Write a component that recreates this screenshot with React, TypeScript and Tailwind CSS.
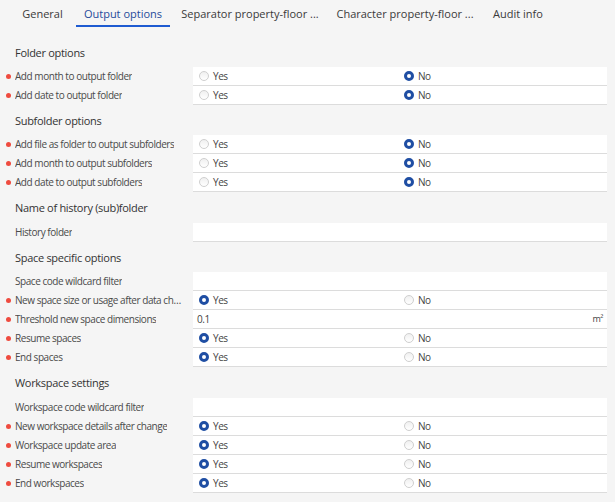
import React from "react";

type Row =
  | { kind: "radio"; label: string; req: boolean; yes: boolean }
  | { kind: "text"; label: string; req: boolean; value?: string; unit?: string };

type Section = { title: string; h: string; rows: Row[] };

const sections: Section[] = [
  {
    title: "Folder options",
    h: "h-[30px]",
    rows: [
      { kind: "radio", label: "Add month to output folder", req: true, yes: false },
      { kind: "radio", label: "Add date to output folder", req: true, yes: false },
    ],
  },
  {
    title: "Subfolder options",
    h: "h-[30px]",
    rows: [
      { kind: "radio", label: "Add file as folder to output subfolders", req: true, yes: false },
      { kind: "radio", label: "Add month to output subfolders", req: true, yes: false },
      { kind: "radio", label: "Add date to output subfolders", req: true, yes: false },
    ],
  },
  {
    title: "Name of history (sub)folder",
    h: "h-[31px]",
    rows: [{ kind: "text", label: "History folder", req: false }],
  },
  {
    title: "Space specific options",
    h: "h-[30px]",
    rows: [
      { kind: "text", label: "Space code wildcard filter", req: false },
      { kind: "radio", label: "New space size or usage after data change", req: true, yes: true },
      { kind: "text", label: "Threshold new space dimensions", req: true, value: "0.1", unit: "m²" },
      { kind: "radio", label: "Resume spaces", req: true, yes: true },
      { kind: "radio", label: "End spaces", req: true, yes: true },
    ],
  },
  {
    title: "Workspace settings",
    h: "h-[31px]",
    rows: [
      { kind: "text", label: "Workspace code wildcard filter", req: false },
      { kind: "radio", label: "New workspace details after change", req: true, yes: true },
      { kind: "radio", label: "Workspace update area", req: true, yes: true },
      { kind: "radio", label: "Resume workspaces", req: true, yes: true },
      { kind: "radio", label: "End workspaces", req: true, yes: true },
    ],
  },
];

const tabs = [
  { label: "General", w: "w-[57px]", active: false },
  { label: "Output options", w: "w-[94px]", active: true },
  { label: "Separator property-floor ...", w: "w-[150px]", active: false },
  { label: "Character property-floor ...", w: "w-[150px]", active: false },
  { label: "Audit info", w: "w-[66px]", active: false },
];

function Radio({ on }: { on: boolean }) {
  return on ? (
    <span className="block w-[10px] h-[10px] shrink-0 rounded-full border-[3px] border-[#1f4ea3] bg-white" />
  ) : (
    <span className="block w-[10px] h-[10px] shrink-0 rounded-full border border-[#cfcfcf] bg-gradient-to-b from-[#f0f0f0] to-white" />
  );
}

function FormRow({ row }: { row: Row }) {
  return (
    <div className="flex h-[19px]">
      <div className="w-[193px] flex items-center pl-[6px] pr-[8px] pb-[2px] text-[#4a4a4a]">
        <span className="w-[9px] shrink-0 flex items-center pt-[1px]">
          {row.req && <span className="block w-[5px] h-[5px] rounded-full bg-[#ef4b3f]" />}
        </span>
        <span className="truncate">{row.label}</span>
      </div>
      <div className="w-[414px] h-[19px] bg-white border-b border-[#dcdcdc] flex items-center pb-[1px] text-[#444]">
        {row.kind === "radio" ? (
          <div className="flex items-center pl-[6px]">
            <div className="w-[205px] flex items-center gap-[4px]">
              <Radio on={row.yes} />
              <span>Yes</span>
            </div>
            <div className="flex items-center gap-[4px]">
              <Radio on={!row.yes} />
              <span>No</span>
            </div>
          </div>
        ) : (
          <div className="flex-1 flex items-center justify-between pl-[4px] pr-[4px]">
            <span>{row.value ?? ""}</span>
            {row.unit && <span className="text-[9px]">{row.unit}</span>}
          </div>
        )}
      </div>
    </div>
  );
}

export default function App() {
  return (
    <div
      className="w-[615px] h-[502px] bg-[#f5f5f5] overflow-hidden text-[10px] tracking-[-0.45px] leading-[14px]"
      style={{ fontFamily: '"Open Sans", "Noto Sans", sans-serif' }}
    >
      <div className="flex gap-[5px] pl-[14px] h-[27px] text-[11px] tracking-normal">
        {tabs.map((t) => (
          <div
            key={t.label}
            className={`${t.w} pt-[6px] pb-[3px] text-center leading-[16px] border-b-2 whitespace-nowrap ${
              t.active ? "border-[#1e5bd1] text-[#1f4a9a]" : "border-transparent text-[#3a3a3a]"
            }`}
          >
            {t.label}
          </div>
        ))}
      </div>
      <div className="mt-[10px]">
        {sections.map((s) => (
          <div key={s.title}>
            <div className={`${s.h} pt-[9px] pl-[15px] text-[11px] tracking-[-0.3px] text-[#333] font-medium`}>
              {s.title}
            </div>
            {s.rows.map((r) => (
              <FormRow key={r.label} row={r} />
            ))}
          </div>
        ))}
      </div>
    </div>
  );
}
